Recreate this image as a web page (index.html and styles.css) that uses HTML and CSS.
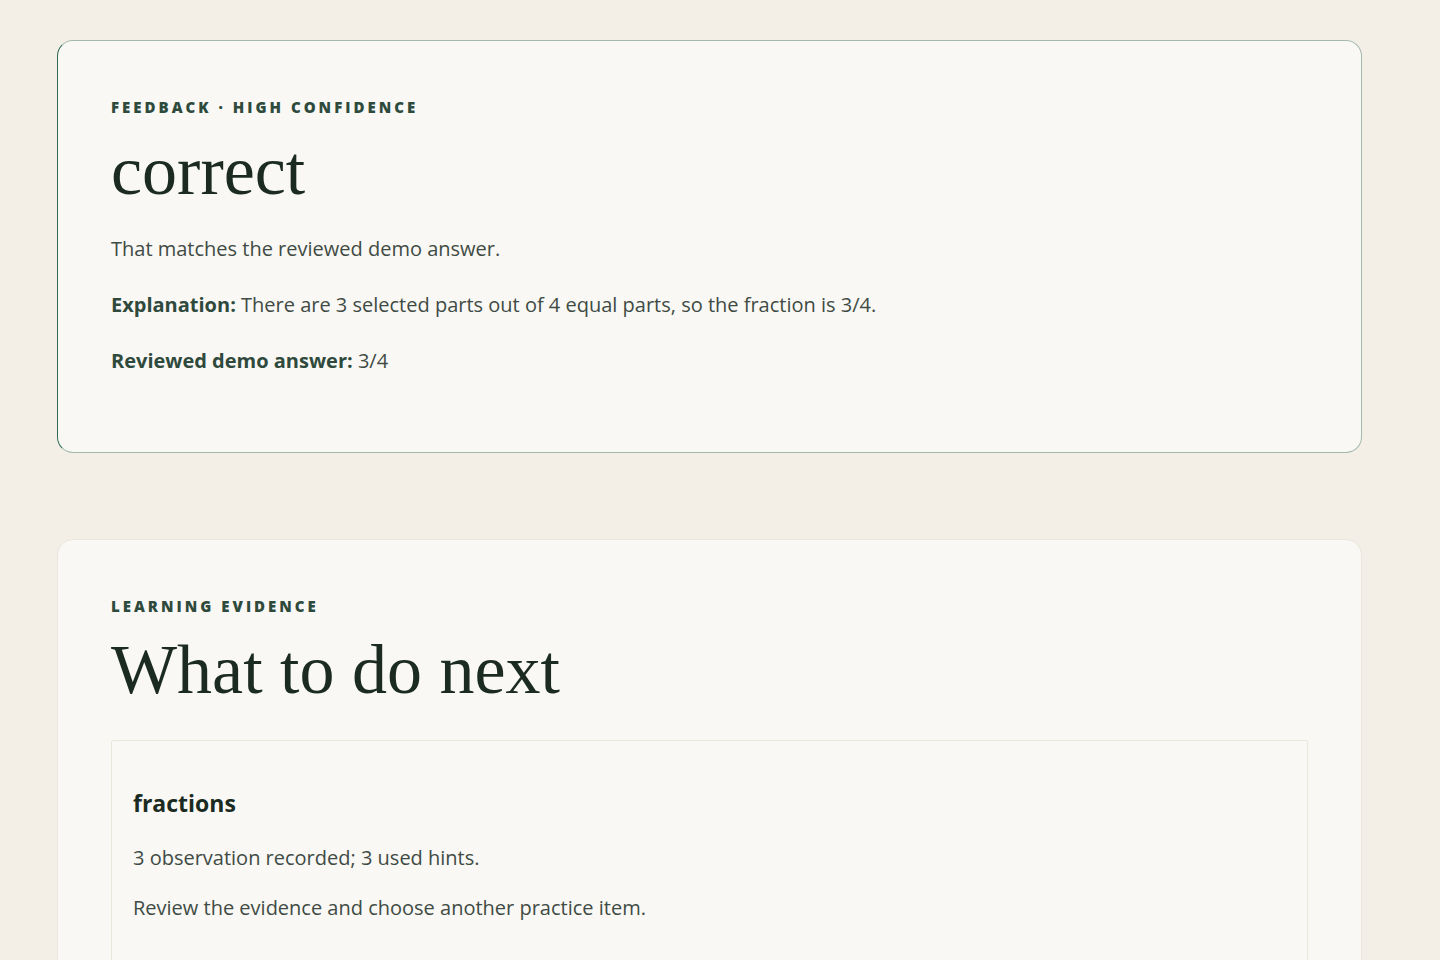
FILE: index.html
```html
<!DOCTYPE html>
<html lang="en">
<head>
<meta charset="utf-8">
<title>Feedback</title>
<link rel="stylesheet" href="styles.css">
</head>
<body>
<main class="page">
  <section class="card card-feedback">
    <p class="eyebrow">Feedback · High confidence</p>
    <h1 class="title">correct</h1>
    <p class="text">That matches the reviewed demo answer.</p>
    <p class="text"><strong>Explanation:</strong> There are 3 selected parts out of 4 equal parts, so the fraction is 3/4.</p>
    <p class="text"><strong>Reviewed demo answer:</strong> 3/4</p>
  </section>
  <section class="card card-evidence">
    <p class="eyebrow">Learning evidence</p>
    <h2 class="title">What to do next</h2>
    <div class="skill">
      <h3 class="skill-name">fractions</h3>
      <p class="text">3 observation recorded; 3 used hints.</p>
      <p class="text">Review the evidence and choose another practice item.</p>
    </div>
  </section>
</main>
</body>
</html>
```
FILE: styles.css
```css
html, body {
  margin: 0;
  padding: 0;
  background: #f3efe6;
}
body {
  font-family: "Open Sans", "Noto Sans", sans-serif;
  color: #3f4b44;
}
.page {
  width: 1305px;
  padding: 40px 0 40px 57px;
  display: flex;
  flex-direction: column;
  gap: 86px;
}
.card {
  background: #f9f8f4;
  border: 1px solid #ebe6dc;
  border-radius: 16px;
  padding: 57px 53px 75px;
}
.card-feedback {
  border-color: #a3b9ad;
  border-left-color: #2f6a55;
}
.eyebrow {
  margin: 0;
  font-size: 15px;
  line-height: 18px;
  font-weight: 800;
  letter-spacing: 0.2em;
  text-transform: uppercase;
  color: #2e4a3c;
}
.title {
  margin: 15px 0 0;
  font-family: "Liberation Serif", "Times New Roman", serif;
  font-weight: 400;
  font-size: 70px;
  line-height: 80px;
  color: #1b2b22;
}
.text {
  margin: 24px 0 0;
  font-size: 20px;
  line-height: 32px;
}
.title + .text {
  margin-top: 22px;
}
.text strong {
  font-weight: 700;
  color: #2f4a3c;
}
.skill {
  margin-top: 30px;
  border: 1px solid #ebe6dc;
  border-radius: 2px;
  padding: 48px 21px 40px;
}
.skill-name {
  margin: 0;
  font-size: 23px;
  line-height: 28px;
  font-weight: 700;
  color: #1b2b22;
}
.skill .text {
  margin-top: 18px;
}
.skill-name + .text {
  margin-top: 25px;
}
```
